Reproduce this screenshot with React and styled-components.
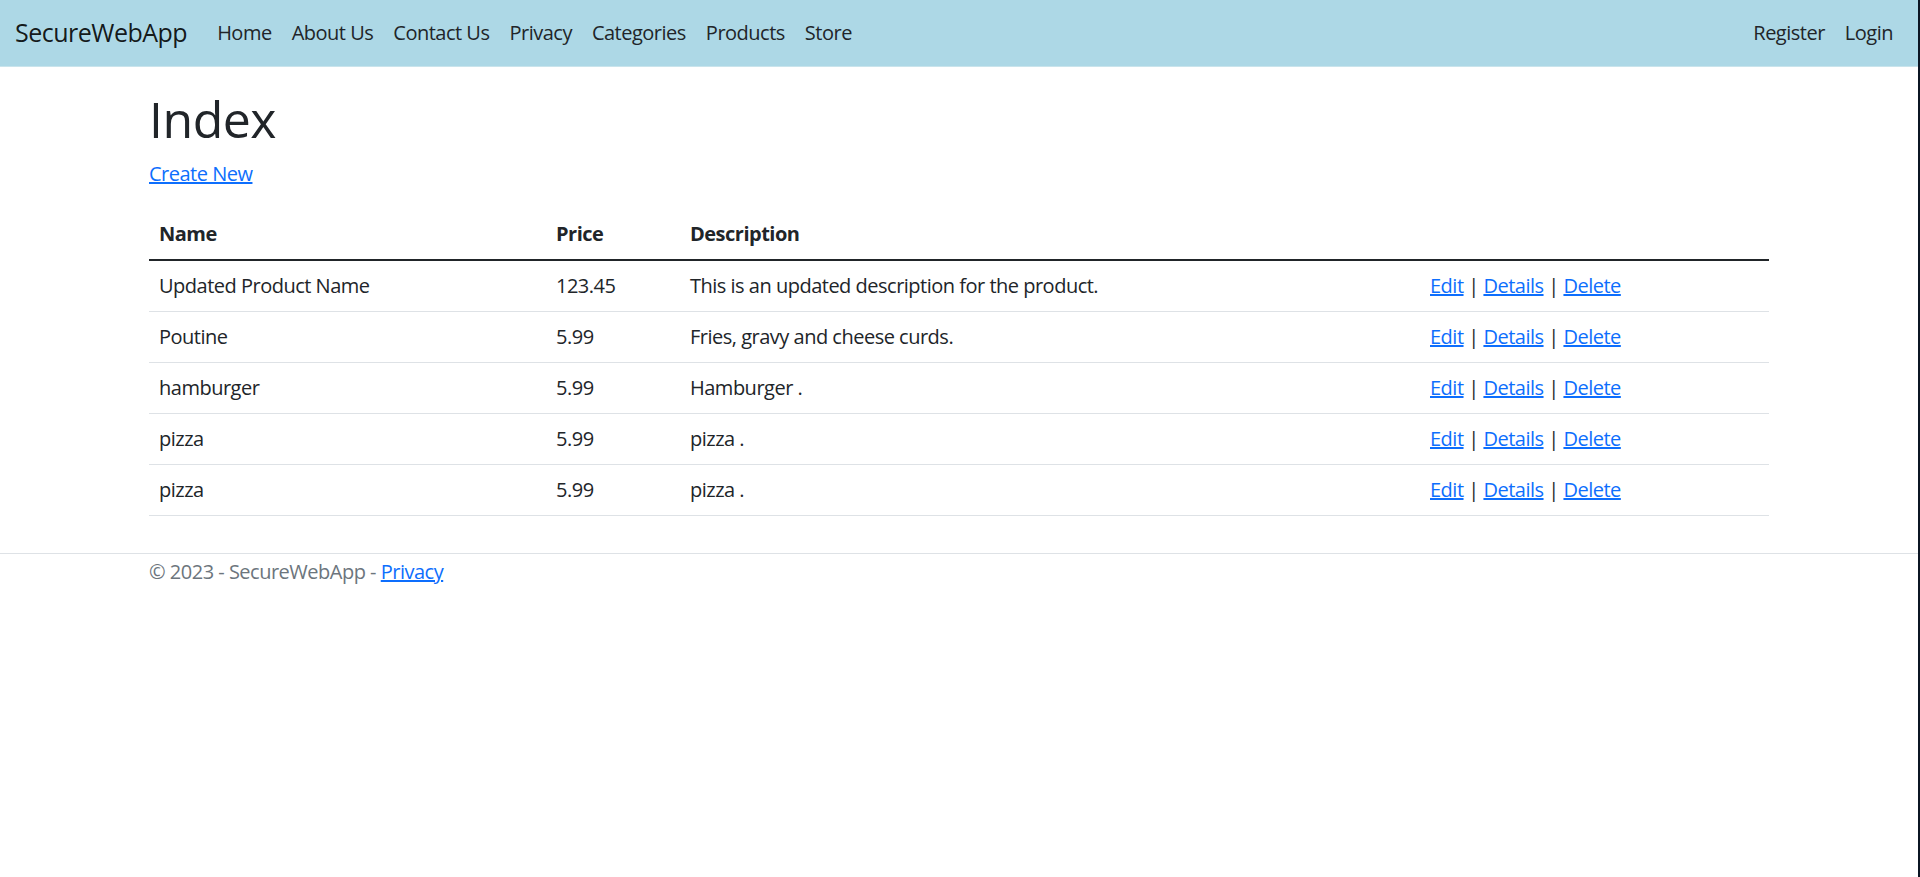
import React from "react";
import styled, { createGlobalStyle } from "styled-components";

const GlobalStyle = createGlobalStyle`
  html, body {
    margin: 0;
    padding: 0;
  }
  body {
    font-family: "Open Sans", "Noto Sans", "Liberation Sans", sans-serif;
    font-size: 20px;
    line-height: 1.5;
    letter-spacing: -0.025em;
    color: #212529;
    background: #fff;
  }
  * {
    box-sizing: border-box;
  }
`;

const products = [
  { name: "Updated Product Name", price: "123.45", description: "This is an updated description for the product." },
  { name: "Poutine", price: "5.99", description: "Fries, gravy and cheese curds." },
  { name: "hamburger", price: "5.99", description: "Hamburger ." },
  { name: "pizza", price: "5.99", description: "pizza ." },
  { name: "pizza", price: "5.99", description: "pizza ." },
];

const leftLinks = ["Home", "About Us", "Contact Us", "Privacy", "Categories", "Products", "Store"];
const rightLinks = ["Register", "Login"];

export default function App() {
  return (
    <Page>
      <GlobalStyle />
      <Navbar>
        <Brand href="#">SecureWebApp</Brand>
        <NavList>
          {leftLinks.map((l) => (
            <NavLink key={l} href="#">{l}</NavLink>
          ))}
        </NavList>
        <NavList>
          {rightLinks.map((l) => (
            <NavLink key={l} href="#">{l}</NavLink>
          ))}
        </NavList>
      </Navbar>

      <Main>
        <Title>Index</Title>
        <Para>
          <Link href="#">Create New</Link>
        </Para>
        <Table>
          <colgroup>
            <col style={{ width: 397 }} />
            <col style={{ width: 134 }} />
            <col style={{ width: 740 }} />
            <col />
          </colgroup>
          <thead>
            <tr>
              <Th>Name</Th>
              <Th>Price</Th>
              <Th>Description</Th>
              <Th></Th>
            </tr>
          </thead>
          <tbody>
            {products.map((p, i) => (
              <tr key={i}>
                <Td>{p.name}</Td>
                <Td>{p.price}</Td>
                <Td>{p.description}</Td>
                <Td>
                  <Link href="#">Edit</Link> | <Link href="#">Details</Link> |{" "}
                  <Link href="#">Delete</Link>
                </Td>
              </tr>
            ))}
          </tbody>
        </Table>
      </Main>

      <Footer>
        <FooterInner>
          &copy; 2023 - SecureWebApp - <Link href="#">Privacy</Link>
        </FooterInner>
      </Footer>
    </Page>
  );
}

const Page = styled.div`
  min-height: 100vh;
  border-right: 2px solid #0b1523;
`;

const Navbar = styled.nav`
  display: flex;
  align-items: center;
  height: 67px;
  padding: 0 15px;
  background-color: lightblue;
  border-bottom: 1px solid #c9e4ec;
`;

const Brand = styled.a`
  font-size: 25px;
  line-height: 1.5;
  color: rgba(0, 0, 0, 0.9);
  text-decoration: none;
  margin-right: 20px;
  white-space: nowrap;
`;

const NavList = styled.div`
  display: flex;
  align-items: center;
  &:last-child {
    margin-left: auto;
  }
`;

const NavLink = styled.a`
  padding: 10px;
  color: #212529;
  text-decoration: none;
  white-space: nowrap;
`;

const Main = styled.main`
  width: 1620px;
  margin: 22px auto 0;
  padding-bottom: 20px;
`;

const Title = styled.h1`
  margin: 0 0 10px;
  font-size: 50px;
  font-weight: 500;
  line-height: 1.2;
`;

const Para = styled.p`
  margin: 0 0 20px;
`;

const Link = styled.a`
  color: #0d6efd;
  text-decoration: underline;
`;

const Table = styled.table`
  width: 100%;
  margin-bottom: 17px;
  border-collapse: collapse;
  table-layout: fixed;
`;

const Th = styled.th`
  text-align: left;
  font-weight: 700;
  padding: 10px;
  border-bottom: 2px solid #212529;
`;

const Td = styled.td`
  padding: 10px;
  border-bottom: 1px solid #dee2e6;
  vertical-align: top;
`;

const Footer = styled.footer`
  border-top: 1px solid #dee2e6;
  color: #6c757d;
`;

const FooterInner = styled.div`
  width: 1620px;
  margin: 0 auto;
  line-height: 36px;
  white-space: nowrap;
`;
